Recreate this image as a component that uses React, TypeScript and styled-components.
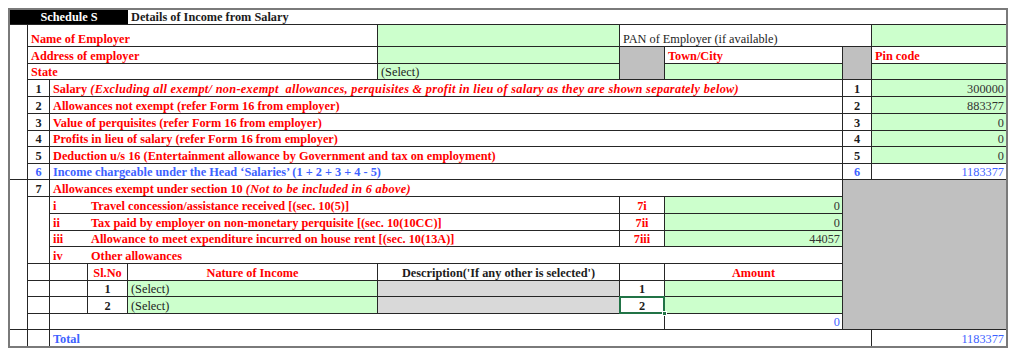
import React from 'react';
import styled, { createGlobalStyle } from 'styled-components';

const Global = createGlobalStyle`
  html, body { margin: 0; padding: 0; background: #ffffff; }
  body { font-family: "Liberation Serif", "Times New Roman", serif; }
`;

const Page = styled.div`
  padding: 8px 0 0 8px;
`;

const Sheet = styled.div`
  display: grid;
  grid-template-columns: 18px 22px 38px 40px 250px 242px 45px 178px 29px 134px;
  grid-template-rows: 15px 22px 17px 16px 17px 17px 17px 16px 17px 16px 17px 17px 17px 16px 17px 17px 16px 17px 16px 16px;
  width: max-content;
  border: 2px solid #7a7a7a;
  font-family: "Liberation Serif", "Times New Roman", serif;
  font-size: 12.3px;
`;

type Align = 'left' | 'center' | 'right';

type CellProps = {
  $c: string;
  $r: string;
  $bg?: string;
  $color?: string;
  $bold?: boolean;
  $align?: Align;
  $nr?: boolean;
  $nb?: boolean;
};

const LINE = '#262626';
const GREEN = '#ccffcc';
const GRAY = '#c0c0c0';
const LIGHTGRAY = '#d9d9d9';
const RED = '#ff0000';
const BLUE = '#3d62ff';
const INK = '#1c1c1c';

const Cell = styled.div<CellProps>`
  grid-column: ${p => p.$c};
  grid-row: ${p => p.$r};
  position: relative;
  box-sizing: border-box;
  display: flex;
  align-items: flex-end;
  justify-content: ${p =>
    p.$align === 'center' ? 'center' : p.$align === 'right' ? 'flex-end' : 'flex-start'};
  padding: 0 ${p => (p.$align === 'right' ? '2px' : '0')} 0
    ${p => (!p.$align || p.$align === 'left' ? '3px' : '0')};
  background: ${p => p.$bg ?? '#ffffff'};
  color: ${p => p.$color ?? INK};
  font-weight: ${p => (p.$bold ? 700 : 400)};
  border-right: ${p => (p.$nr ? 'none' : `1px solid ${LINE}`)};
  border-bottom: ${p => (p.$nb ? 'none' : `1px solid ${LINE}`)};
  white-space: nowrap;
  line-height: 14px;
`;

const SelectedCell = styled(Cell)`
  z-index: 1;
  &::before {
    content: '';
    position: absolute;
    left: -1px;
    top: -1px;
    right: -1px;
    bottom: -1px;
    border: 2px solid #217346;
  }
  &::after {
    content: '';
    position: absolute;
    right: -3px;
    bottom: -3px;
    width: 5px;
    height: 5px;
    background: #217346;
    border: 1px solid #ffffff;
    box-sizing: border-box;
  }
`;

const Em = styled.span`
  font-style: italic;
  letter-spacing: 0.3px;
`;

const Label = (props: { c: string; r: string; children: React.ReactNode; color?: string; nr?: boolean }) => (
  <Cell $c={props.c} $r={props.r} $color={props.color ?? RED} $bold $nr={props.nr}>
    {props.children}
  </Cell>
);

const mainRows: { n: string; label: React.ReactNode; value: string; blue?: boolean }[] = [
  {
    n: '1',
    label: (
      <>
        Salary&nbsp;<Em>(Excluding all exempt/ non-exempt&nbsp; allowances, perquisites &amp; profit in lieu of salary as they are shown separately below)</Em>
      </>
    ),
    value: '300000',
  },
  { n: '2', label: 'Allowances not exempt (refer Form 16 from employer)', value: '883377' },
  { n: '3', label: 'Value of perquisites (refer Form 16 from employer)', value: '0' },
  { n: '4', label: 'Profits in lieu of salary (refer Form 16 from employer)', value: '0' },
  { n: '5', label: 'Deduction u/s 16 (Entertainment allowance by Government and tax on employment)', value: '0' },
  {
    n: '6',
    label: 'Income chargeable under the Head \u2018Salaries\u2019 (1 + 2 + 3 + 4 - 5)',
    value: '1183377',
    blue: true,
  },
];

const exemptRows = [
  { roman: 'i', label: 'Travel concession/assistance received [(sec. 10(5)]', code: '7i', value: '0' },
  { roman: 'ii', label: 'Tax paid by employer on non-monetary perquisite [(sec. 10(10CC)]', code: '7ii', value: '0' },
  { roman: 'iii', label: 'Allowance to meet expenditure incurred on house rent [(sec. 10(13A)]', code: '7iii', value: '44057' },
];

export default function App() {
  return (
    <Page>
      <Global />
      <Sheet>
        {/* header */}
        <Cell $c="1 / 5" $r="1" $bg="#000000" $color="#ffffff" $bold $align="center" $nr>
          Schedule S
        </Cell>
        <Cell $c="5 / 11" $r="1" $bold $nr>
          Details of Income from Salary
        </Cell>

        {/* left blank column */}
        <Cell $c="1" $r="2 / 11" />
        <Cell $c="1" $r="11 / 20" />
        <Cell $c="1" $r="20" $nb />

        {/* employer block */}
        <Label c="2 / 6" r="2">Name of Employer</Label>
        <Cell $c="6" $r="2" $bg={GREEN} />
        <Cell $c="7 / 10" $r="2">PAN of Employer (if available)</Cell>
        <Cell $c="10" $r="2" $bg={GREEN} $nr />

        <Label c="2 / 6" r="3">Address of employer</Label>
        <Cell $c="6" $r="3" $bg={GREEN} />
        <Cell $c="7" $r="3 / 5" $bg={GRAY} />
        <Label c="8" r="3">Town/City</Label>
        <Cell $c="9" $r="3 / 5" $bg={GRAY} />
        <Label c="10" r="3" nr>Pin code</Label>

        <Label c="2 / 6" r="4">State</Label>
        <Cell $c="6" $r="4" $bg={GREEN}>(Select)</Cell>
        <Cell $c="8" $r="4" $bg={GREEN} />
        <Cell $c="10" $r="4" $bg={GREEN} $nr />

        {/* rows 1-6 */}
        {mainRows.map((row, i) => {
          const r = String(5 + i);
          const color = row.blue ? BLUE : RED;
          return (
            <React.Fragment key={row.n}>
              <Cell $c="2" $r={r} $bold $align="center" $color={row.blue ? BLUE : INK}>
                {row.n}
              </Cell>
              <Label c="3 / 9" r={r} color={color}>{row.label}</Label>
              <Cell $c="9" $r={r} $bold $align="center" $color={row.blue ? BLUE : INK}>
                {row.n}
              </Cell>
              <Cell
                $c="10"
                $r={r}
                $align="right"
                $bg={row.blue ? '#ffffff' : GREEN}
                $color={row.blue ? BLUE : '#333333'}
                $nr
              >
                {row.value}
              </Cell>
            </React.Fragment>
          );
        })}

        {/* row 7 */}
        <Cell $c="2" $r="11" $bold $align="center">7</Cell>
        <Label c="3 / 9" r="11">
          Allowances exempt under section 10&nbsp;<Em>(Not to be included in 6 above)</Em>
        </Label>
        <Cell $c="9 / 11" $r="11 / 20" $bg={GRAY} $nr />

        <Cell $c="2" $r="12 / 16" />
        {exemptRows.map((row, i) => {
          const r = String(12 + i);
          return (
            <React.Fragment key={row.roman}>
              <Label c="3" r={r} nr>{row.roman}</Label>
              <Label c="4 / 7" r={r}>{row.label}</Label>
              <Cell $c="7" $r={r} $bold $align="center" $color={RED}>{row.code}</Cell>
              <Cell $c="8" $r={r} $bg={GREEN} $align="right" $color="#333333">{row.value}</Cell>
            </React.Fragment>
          );
        })}
        <Label c="3" r="15" nr>iv</Label>
        <Label c="4 / 9" r="15">Other allowances</Label>

        {/* other allowances table */}
        <Cell $c="2" $r="16" />
        <Cell $c="3" $r="16" />
        <Cell $c="4" $r="16" $bold $align="center" $color={RED}>Sl.No</Cell>
        <Cell $c="5" $r="16" $bold $align="center" $color={RED}>Nature of Income</Cell>
        <Cell $c="6" $r="16" $bold $align="center">Description('If any other is selected')</Cell>
        <Cell $c="7" $r="16" />
        <Cell $c="8" $r="16" $bold $align="center" $color={RED}>Amount</Cell>

        {['1', '2'].map((n, i) => {
          const r = String(17 + i);
          const Num = i === 1 ? SelectedCell : Cell;
          return (
            <React.Fragment key={n}>
              <Cell $c="2" $r={r} />
              <Cell $c="3" $r={r} />
              <Cell $c="4" $r={r} $bold $align="center">{n}</Cell>
              <Cell $c="5" $r={r} $bg={GREEN}>(Select)</Cell>
              <Cell $c="6" $r={r} $bg={LIGHTGRAY} />
              <Num $c="7" $r={r} $bold $align="center">{n}</Num>
              <Cell $c="8" $r={r} $bg={GREEN} />
            </React.Fragment>
          );
        })}

        <Cell $c="2" $r="19" />
        <Cell $c="3 / 8" $r="19" />
        <Cell $c="8" $r="19" $align="right" $color={BLUE}>0</Cell>

        {/* total */}
        <Cell $c="2" $r="20" $nb />
        <Cell $c="3 / 10" $r="20" $bold $color={BLUE} $nb>Total</Cell>
        <Cell $c="10" $r="20" $align="right" $color={BLUE} $nr $nb>1183377</Cell>
      </Sheet>
    </Page>
  );
}
